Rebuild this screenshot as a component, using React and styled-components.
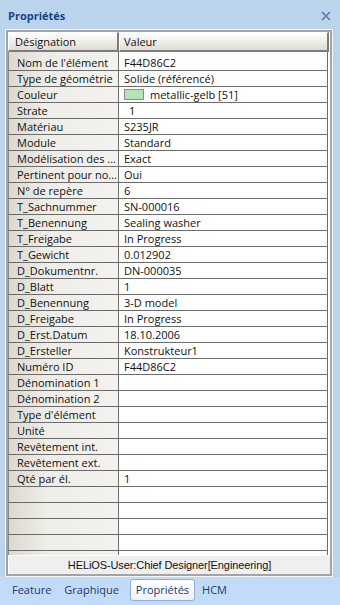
import React from "react";
import styled, { createGlobalStyle } from "styled-components";

const Global = createGlobalStyle`
  html, body { margin: 0; padding: 0; }
  body { background: #bcd4ee; font-family: "Open Sans", "Noto Sans", sans-serif; }
  * { box-sizing: border-box; }
`;

const Window = styled.div`
  width: 340px;
  height: 605px;
  display: flex;
  flex-direction: column;
  background: #bcd3ec;
  overflow: hidden;
`;

const TitleBar = styled.div`
  height: 29px;
  display: flex;
  align-items: center;
  justify-content: space-between;
  padding: 0 8px 0 8px;
`;

const Title = styled.div`
  font-size: 11px;
  font-weight: bold;
  color: #15428b;
  padding-top: 2px;
`;

const Close = styled.div`
  width: 12px;
  height: 12px;
  display: flex;
  align-items: center;
  justify-content: center;
  margin-top: 2px;
`;

const Frame = styled.div`
  margin-left: 5px;
  width: 328px;
  height: 548px;
  border: 1px solid #f3f7fc;
  display: flex;
`;

const Inner = styled.div`
  flex: 1;
  border: 2px solid #a4a4a4;
  background: #ffffff;
  display: flex;
  flex-direction: column;
`;

const Row = styled.div`
  display: flex;
  height: ${(p) => p.$h || 16}px;
  flex-shrink: 0;
`;

const HeadCell = styled.div`
  width: ${(p) => (p.$w ? p.$w + "px" : "auto")};
  flex: ${(p) => (p.$w ? "none" : "1")};
  background: linear-gradient(to bottom, #ffffff, #f3f2ee 40%, #dedbd3);
  border-top: 1px solid #ffffff;
  border-left: 1px solid #ffffff;
  border-right: 2px solid #7c7c7c;
  border-bottom: 2px solid #7c7c7c;
  font-size: 11px;
  color: #111;
  display: flex;
  align-items: center;
  padding-left: ${(p) => p.$pad}px;
  margin-right: ${(p) => p.$mr || 0}px;
`;

const LabelCell = styled.div`
  width: 111px;
  flex: none;
  background: linear-gradient(to right, #dcd9cf, #eeede8 35%, #f3f2ef);
  border-bottom: 1px solid #6c6c6c;
  border-right: 1px solid #6c6c6c;
  border-left: 1px solid #8a8a8a;
  font-size: 11px;
  color: #111;
  white-space: nowrap;
  overflow: hidden;
  display: flex;
  align-items: center;
  padding-left: 8px;
`;

const ValueCell = styled.div`
  flex: 1;
  background: #ffffff;
  border-bottom: 1px solid #6c6c6c;
  border-right: 1px solid #6c6c6c;
  margin-right: 2px;
  font-size: 11px;
  color: #111;
  white-space: nowrap;
  overflow: hidden;
  display: flex;
  align-items: center;
  padding-left: ${(p) => (p.$indent ? 10 : 5)}px;
  gap: 6px;
`;

const Spacer = styled.div`
  display: flex;
  height: 3px;
  flex-shrink: 0;
`;

const SpacerLeft = styled.div`
  width: 111px;
  background: linear-gradient(to right, #dcd9cf, #eeede8 35%, #f3f2ef);
  border-right: 1px solid #6c6c6c;
  border-left: 1px solid #8a8a8a;
`;

const SpacerRight = styled.div`
  flex: 1;
  border-right: 1px solid #6c6c6c;
  margin-right: 2px;
`;

const Filler = styled.div`
  flex: 1;
  display: flex;
  overflow: hidden;
  flex-direction: column;
`;

const Swatch = styled.span`
  width: 20px;
  height: 11px;
  background: #b6e3b6;
  border: 1px solid #8c8c8c;
  flex: none;
`;

const StatusBar = styled.div`
  height: 19px;
  flex-shrink: 0;
  background: #efefef;
  border-top: 1px solid #fdfdfd;
  font-family: "Liberation Sans", Arial, sans-serif;
  font-size: 11px;
  color: #111;
  display: flex;
  align-items: center;
  justify-content: center;
  letter-spacing: -0.1px;
  margin-left: 1px;
`;

const TabBar = styled.div`
  flex: 1;
  background: #c1dbf8;
  display: flex;
  align-items: flex-start;
  padding: 2px 0 0 6px;
`;

const Tab = styled.div`
  font-size: 11px;
  color: #1e3a6a;
  padding: 3px 5px 3px 5px;
  margin-right: ${(p) => p.$mr}px;
  border: 1px solid ${(p) => (p.$active ? "#93aed3" : "transparent")};
  border-radius: 3px;
  background: ${(p) =>
    p.$active ? "linear-gradient(to bottom, #ffffff, #eef4fc)" : "transparent"};
  line-height: 14px;
`;

const rows = [
  ["Nom de l'élément", "F44D86C2"],
  ["Type de géométrie", "Solide (référencé)"],
  ["Couleur", "metallic-gelb [51]", "swatch"],
  ["Strate", "1", "indent"],
  ["Matériau", "S235JR"],
  ["Module", "Standard"],
  ["Modélisation des ...", "Exact"],
  ["Pertinent pour no...", "Oui"],
  ["N° de repère", "6"],
  ["T_Sachnummer", "SN-000016"],
  ["T_Benennung", "Sealing washer"],
  ["T_Freigabe", "In Progress"],
  ["T_Gewicht", "0.012902"],
  ["D_Dokumentnr.", "DN-000035"],
  ["D_Blatt", "1"],
  ["D_Benennung", "3-D model"],
  ["D_Freigabe", "In Progress"],
  ["D_Erst.Datum", "18.10.2006"],
  ["D_Ersteller", "Konstrukteur1"],
  ["Numéro ID", "F44D86C2"],
  ["Dénomination 1", ""],
  ["Dénomination 2", ""],
  ["Type d'élément", ""],
  ["Unité", ""],
  ["Revêtement int.", ""],
  ["Revêtement ext.", ""],
  ["Qté par él.", "1"],
];

export default function App() {
  return (
    <>
      <Global />
      <Window>
        <TitleBar>
          <Title>Propriétés</Title>
          <Close>
            <svg width="10" height="10" viewBox="0 0 10 10">
              <path d="M1 1 L9 9 M9 1 L1 9" stroke="#5a7aa8" strokeWidth="1.6" />
            </svg>
          </Close>
        </TitleBar>
        <Frame>
          <Inner>
            <Row $h={20}>
              <HeadCell $w={111} $pad={6}>Désignation</HeadCell>
              <HeadCell $pad={4} $mr={1}>Valeur</HeadCell>
            </Row>
            <Spacer>
              <SpacerLeft />
              <SpacerRight />
            </Spacer>
            {rows.map(([l, v, kind]) => (
              <Row key={l}>
                <LabelCell>{l}</LabelCell>
                <ValueCell $indent={kind === "indent"}>
                  {kind === "swatch" && <Swatch />}
                  {v}
                </ValueCell>
              </Row>
            ))}
            <Filler>
              {[0, 1, 2, 3, 4].map((i) => (
                <Row key={i}>
                  <LabelCell />
                  <ValueCell />
                </Row>
              ))}
            </Filler>
            <StatusBar>HELiOS-User:Chief Designer[Engineering]</StatusBar>
          </Inner>
        </Frame>
        <TabBar>
          <Tab $mr={1}>Feature</Tab>
          <Tab $mr={5}>Graphique</Tab>
          <Tab $active $mr={1}>Propriétés</Tab>
          <Tab $mr={0}>HCM</Tab>
        </TabBar>
      </Window>
    </>
  );
}
